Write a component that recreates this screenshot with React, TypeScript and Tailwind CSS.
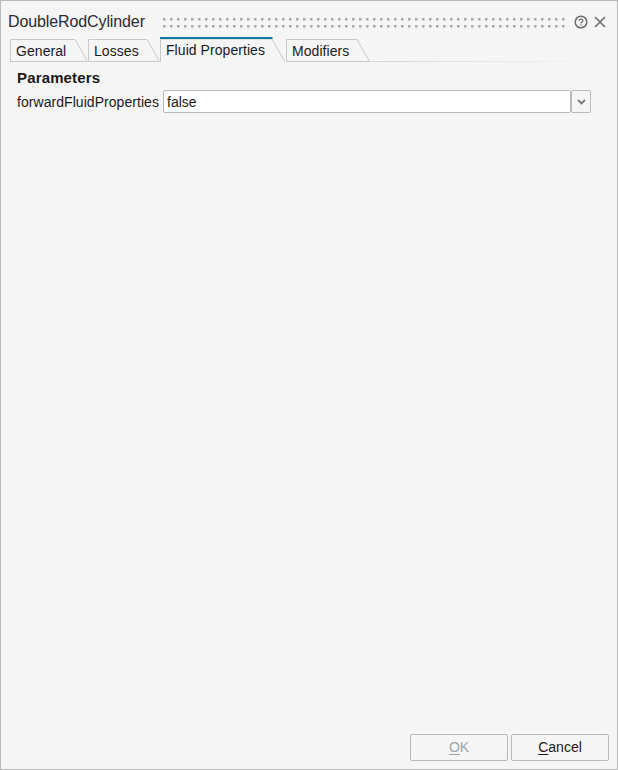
import React from "react";

const TABS = [
  { label: "General", width: 78, active: false },
  { label: "Losses", width: 72, active: false },
  { label: "Fluid Properties", width: 126, active: true },
  { label: "Modifiers", width: 84, active: false },
];

function Tab({ label, width, active }: { label: string; width: number; active: boolean }) {
  const right = width - (active ? 1 : 0.5);
  const shoulder = width - (active ? 14 : 13);
  return (
    <div className="relative h-[25px] shrink-0" style={{ width }}>
      <svg className="absolute left-0 top-0" width={width} height={25}>
        {active ? (
          <>
            <path d={`M0.5 25 V2 H${shoulder} L${right} 25`} fill="#f5f5f5" stroke="#c8c8c8" />
            <path d={`M0 1 H${shoulder + 0.5}`} stroke="#0a7ea4" strokeWidth="2" />
          </>
        ) : (
          <path d={`M0.5 24.5 V2.5 H${shoulder} L${right} 24.5 H0.5`} fill="#f5f5f5" stroke="#c8c8c8" />
        )}
      </svg>
      <span
        className={
          active
            ? "absolute left-[6px] top-[4px] text-[14px] leading-[18px] tracking-[0.06px] text-[#1a1a1a]"
            : "absolute left-[6px] top-[5px] text-[14px] leading-[18px] tracking-[0.06px] text-[#1a1a1a]"
        }
      >
        {label}
      </span>
    </div>
  );
}

function GripDots() {
  return (
    <svg className="ml-[18px] mt-[2px] h-[10px] w-[402px] shrink-0">
      <defs>
        <pattern id="grip" width="7" height="7" patternUnits="userSpaceOnUse">
          <rect width="2.5" height="2.5" fill="#a8a8a8" />
        </pattern>
      </defs>
      <rect width="402" height="10" fill="url(#grip)" />
    </svg>
  );
}

export default function App() {
  return (
    <div className="flex h-[770px] w-[618px] flex-col border border-[#b9b9b9] bg-[#f5f5f5] font-['Liberation_Sans',Arial,sans-serif] text-[#1a1a1a]">
      {/* Title bar */}
      <div className="flex h-[36px] items-center pl-[7px] pt-[6px]">
        <span className="w-[137px] whitespace-nowrap text-[16px] leading-[20px] tracking-[-0.11px] text-[#2b2b2b]">DoubleRodCylinder</span>
        <GripDots />
        <svg className="ml-[9px] shrink-0" width="14" height="14" viewBox="0 0 14 14">
          <circle cx="7" cy="7" r="5.8" fill="none" stroke="#6b6b6b" strokeWidth="1.5" />
          <path d="M5.1 5.6 C5.2 3.6 8.9 3.6 8.9 5.6 C8.9 7 7 6.8 7 8.4" fill="none" stroke="#6b6b6b" strokeWidth="1.2" />
          <rect x="6.4" y="9.3" width="1.3" height="1.3" fill="#6b6b6b" />
        </svg>
        <svg className="ml-[5px] shrink-0" width="14" height="14" viewBox="0 0 14 14">
          <path d="M2 2 L12 12 M12 2 L2 12" stroke="#707070" strokeWidth="1.7" />
        </svg>
      </div>

      {/* Tab strip */}
      <div className="flex h-[25px] items-end pl-[9px] pr-[16px]">
        {TABS.map((tab) => (
          <Tab key={tab.label} {...tab} />
        ))}
        <div className="h-px flex-1 bg-gradient-to-r from-[#d8d8d8] to-[#f5f5f5]" />
      </div>

      {/* Parameters */}
      <div className="flex-1 pl-[16px] pr-[26px] pt-[8px]">
        <div className="text-[15px] font-bold leading-[16px] tracking-[0.15px] text-[#1a1a1a]">Parameters</div>
        <div className="mt-[4px] flex h-[23px] items-center">
          <span className="w-[146px] shrink-0 whitespace-nowrap pt-[1px] text-[14px] leading-[18px] tracking-[0.05px]">forwardFluidProperties</span>
          <div className="flex h-[23px] flex-1 items-center rounded-[2px] border border-[#b9b9b9] bg-white pl-[3px] pt-[1px] text-[14px]">
            false
          </div>
          <div className="flex h-[23px] w-[20px] shrink-0 items-center justify-center rounded-[2px] border border-[#b9b9b9] bg-[#f5f5f5]">
            <svg width="9" height="6" viewBox="0 0 9 6">
              <path d="M1 1 L4.5 4.5 L8 1" fill="none" stroke="#7a7a7a" strokeWidth="1.8" />
            </svg>
          </div>
        </div>
      </div>

      {/* Footer buttons */}
      <div className="flex justify-end gap-[3px] pb-[8px] pr-[8px]">
        <button className="h-[27px] w-[98px] rounded-[2px] border border-[#b9b9b9] text-[14px] text-[#a3a3a3]">
          <span className="underline underline-offset-2">O</span>K
        </button>
        <button className="h-[27px] w-[98px] rounded-[2px] border border-[#b9b9b9] text-[14px] text-[#1a1a1a]">
          <span className="underline underline-offset-2">C</span>ancel
        </button>
      </div>
    </div>
  );
}
